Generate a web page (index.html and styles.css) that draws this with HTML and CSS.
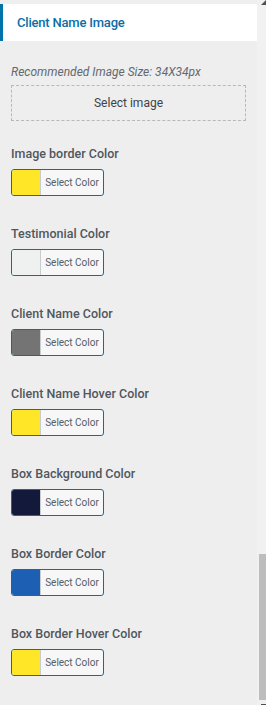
FILE: index.html
```html
<!DOCTYPE html>
<html>
<head>
<meta charset="utf-8">
<link rel="stylesheet" href="styles.css">
</head>
<body>
<div class="frame">
  <main class="panel">
    <div class="section-head">Client Name Image</div>
    <div class="section-body">
      <p class="hint">Recommended Image Size: 34X34px</p>
      <button class="image-drop">Select image</button>

      <div class="color-field">
        <div class="field-label">Image border Color</div>
        <button class="color-btn"><span class="swatch" style="background:#ffe627"></span><span class="btn-text">Select Color</span></button>
      </div>
      <div class="color-field">
        <div class="field-label">Testimonial Color</div>
        <button class="color-btn"><span class="swatch" style="background:#eff0f0"></span><span class="btn-text">Select Color</span></button>
      </div>
      <div class="color-field">
        <div class="field-label">Client Name Color</div>
        <button class="color-btn"><span class="swatch" style="background:#747474"></span><span class="btn-text">Select Color</span></button>
      </div>
      <div class="color-field">
        <div class="field-label">Client Name Hover Color</div>
        <button class="color-btn"><span class="swatch" style="background:#ffe627"></span><span class="btn-text">Select Color</span></button>
      </div>
      <div class="color-field">
        <div class="field-label">Box Background Color</div>
        <button class="color-btn"><span class="swatch" style="background:#12193a"></span><span class="btn-text">Select Color</span></button>
      </div>
      <div class="color-field">
        <div class="field-label">Box Border Color</div>
        <button class="color-btn"><span class="swatch" style="background:#1d5fb3"></span><span class="btn-text">Select Color</span></button>
      </div>
      <div class="color-field">
        <div class="field-label">Box Border Hover Color</div>
        <button class="color-btn"><span class="swatch" style="background:#ffe627"></span><span class="btn-text">Select Color</span></button>
      </div>
    </div>
  </main>
  <aside class="scrollbar">
    <span class="arrow-up"></span>
    <span class="track-space"></span>
    <span class="thumb"></span>
    <span class="arrow-down"></span>
  </aside>
</div>
</body>
</html>
```

FILE: styles.css
```css
html, body {
  margin: 0;
  padding: 0;
  background: #eeeeee;
}
body {
  width: 266px;
  height: 705px;
  overflow: hidden;
  font-family: Roboto, "Liberation Sans", sans-serif;
}
.frame {
  display: flex;
  height: 705px;
}
.panel {
  width: 257px;
  flex: none;
  padding-top: 4px;
}
.section-head {
  height: 37px;
  box-sizing: border-box;
  background: #ffffff;
  border-left: 3px solid #0073aa;
  padding-left: 14px;
  display: flex;
  align-items: center;
  font-size: 13px;
  letter-spacing: -0.2px;
  font-weight: 500;
  color: #0a6ea7;
}
.section-body {
  padding: 0 11px;
  display: flex;
  flex-direction: column;
}
.hint {
  margin: 23px 0 0;
  font-size: 12px;
  line-height: 16px;
  font-style: italic;
  color: #646970;
}
.image-drop {
  margin-top: 5px;
  height: 36px;
  width: 100%;
  box-sizing: border-box;
  border: 1px dashed #b4b9be;
  background: transparent;
  font-family: inherit;
  font-size: 12px;
  color: #3c434a;
  padding: 0;
}
.color-field {
  display: flex;
  flex-direction: column;
  align-items: flex-start;
  gap: 6px;
  margin-top: 23px;
}
.color-field + .color-field {
  margin-top: 28px;
}
.field-label {
  padding-top: 1px;
  font-size: 12.5px;
  line-height: 18px;
  font-weight: 500;
  color: #50575e;
}
.color-btn {
  display: flex;
  width: 93px;
  height: 27px;
  box-sizing: border-box;
  padding: 0;
  border: 1px solid #1b6a8f;
  border-radius: 3px;
  background: #f7f7f7;
  overflow: hidden;
  font-family: inherit;
}
.swatch {
  width: 28px;
  flex: none;
  border-right: 1px solid #c9cccf;
}
.btn-text {
  flex: 1;
  align-self: center;
  text-align: center;
  font-size: 10px;
  color: #555d66;
}
.scrollbar {
  flex: 1;
  display: flex;
  flex-direction: column;
  align-items: flex-end;
  background: #f1f1f1;
}
.arrow-up {
  width: 0;
  height: 0;
  border-left: 5px solid transparent;
  border-bottom: 5px solid #505050;
}
.track-space {
  flex: 1;
}
.thumb {
  width: 7px;
  height: 146px;
  background: #bdbdbd;
  margin-bottom: 4px;
}
.arrow-down {
  width: 5px;
  height: 1px;
  background: #505050;
}
```
